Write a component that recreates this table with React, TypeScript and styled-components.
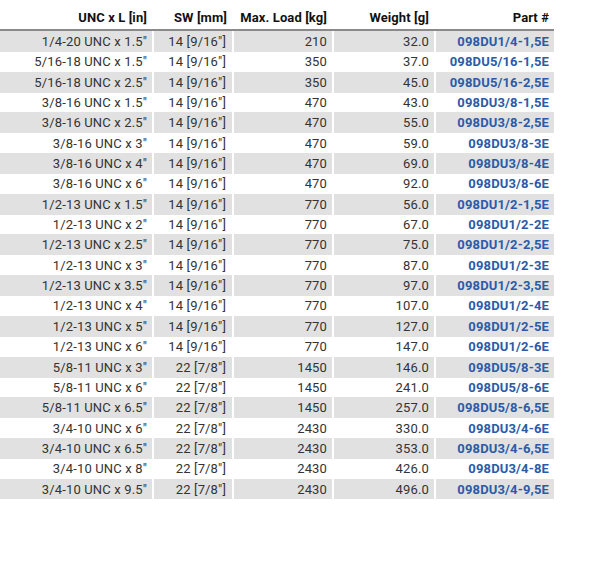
import React from "react";
import styled, { createGlobalStyle } from "styled-components";

const GlobalStyle = createGlobalStyle`
  html, body { margin: 0; padding: 0; background: #ffffff; }
  body { font-family: Roboto, "Liberation Sans", sans-serif; }
`;

const COLS = "152px 78px 98px 100px 118px";

const Table = styled.div`
  width: 554px;
  display: flex;
  flex-direction: column;
`;

const HeaderRow = styled.div`
  display: grid;
  grid-template-columns: ${COLS};
  column-gap: 2px;
  height: 29px;
  align-items: end;
  border-bottom: 2px solid #8a8a8a;
`;

const HeadCell = styled.div`
  text-align: right;
  padding: 0 5px 4px 0;
  font-size: 13px;
  letter-spacing: 0.1px;
  font-weight: 700;
  color: #111;
  white-space: nowrap;
`;

const Row = styled.div`
  display: grid;
  grid-template-columns: ${COLS};
  column-gap: 2px;
  height: 20.35px;
`;

const Cell = styled.div<{ $shaded: boolean; $part?: boolean; $sw?: boolean }>`
  background: ${(p) => (p.$shaded ? "#e1e1e1" : "transparent")};
  text-align: right;
  padding-right: ${(p) => (p.$sw ? "6px" : "5px")};
  padding-top: 1px;
  box-sizing: border-box;
  font-size: 13px;
  letter-spacing: 0.15px;
  line-height: 20px;
  white-space: nowrap;
  color: ${(p) => (p.$part ? "#2b5ba8" : "#333333")};
  font-weight: ${(p) => (p.$part ? 700 : 400)};
`;

type R = [string, string, string, string, string];

const rows: R[] = [
  ["1/4-20 UNC x 1.5\"", "14 [9/16\"]", "210", "32.0", "098DU1/4-1,5E"],
  ["5/16-18 UNC x 1.5\"", "14 [9/16\"]", "350", "37.0", "098DU5/16-1,5E"],
  ["5/16-18 UNC x 2.5\"", "14 [9/16\"]", "350", "45.0", "098DU5/16-2,5E"],
  ["3/8-16 UNC x 1.5\"", "14 [9/16\"]", "470", "43.0", "098DU3/8-1,5E"],
  ["3/8-16 UNC x 2.5\"", "14 [9/16\"]", "470", "55.0", "098DU3/8-2,5E"],
  ["3/8-16 UNC x 3\"", "14 [9/16\"]", "470", "59.0", "098DU3/8-3E"],
  ["3/8-16 UNC x 4\"", "14 [9/16\"]", "470", "69.0", "098DU3/8-4E"],
  ["3/8-16 UNC x 6\"", "14 [9/16\"]", "470", "92.0", "098DU3/8-6E"],
  ["1/2-13 UNC x 1.5\"", "14 [9/16\"]", "770", "56.0", "098DU1/2-1,5E"],
  ["1/2-13 UNC x 2\"", "14 [9/16\"]", "770", "67.0", "098DU1/2-2E"],
  ["1/2-13 UNC x 2.5\"", "14 [9/16\"]", "770", "75.0", "098DU1/2-2,5E"],
  ["1/2-13 UNC x 3\"", "14 [9/16\"]", "770", "87.0", "098DU1/2-3E"],
  ["1/2-13 UNC x 3.5\"", "14 [9/16\"]", "770", "97.0", "098DU1/2-3,5E"],
  ["1/2-13 UNC x 4\"", "14 [9/16\"]", "770", "107.0", "098DU1/2-4E"],
  ["1/2-13 UNC x 5\"", "14 [9/16\"]", "770", "127.0", "098DU1/2-5E"],
  ["1/2-13 UNC x 6\"", "14 [9/16\"]", "770", "147.0", "098DU1/2-6E"],
  ["5/8-11 UNC x 3\"", "22 [7/8\"]", "1450", "146.0", "098DU5/8-3E"],
  ["5/8-11 UNC x 6\"", "22 [7/8\"]", "1450", "241.0", "098DU5/8-6E"],
  ["5/8-11 UNC x 6.5\"", "22 [7/8\"]", "1450", "257.0", "098DU5/8-6,5E"],
  ["3/4-10 UNC x 6\"", "22 [7/8\"]", "2430", "330.0", "098DU3/4-6E"],
  ["3/4-10 UNC x 6.5\"", "22 [7/8\"]", "2430", "353.0", "098DU3/4-6,5E"],
  ["3/4-10 UNC x 8\"", "22 [7/8\"]", "2430", "426.0", "098DU3/4-8E"],
  ["3/4-10 UNC x 9.5\"", "22 [7/8\"]", "2430", "496.0", "098DU3/4-9,5E"],
];

const headers = ["UNC x L [in]", "SW [mm]", "Max. Load [kg]", "Weight [g]", "Part #"];

export default function App() {
  return (
    <>
      <GlobalStyle />
      <Table>
        <HeaderRow>
          {headers.map((h) => (
            <HeadCell key={h}>{h}</HeadCell>
          ))}
        </HeaderRow>
        {rows.map((r, i) => (
          <Row key={r[4]}>
            {r.map((c, j) => (
              <Cell key={j} $shaded={i % 2 === 0} $part={j === 4} $sw={j === 1}>
                {c}
              </Cell>
            ))}
          </Row>
        ))}
      </Table>
    </>
  );
}
